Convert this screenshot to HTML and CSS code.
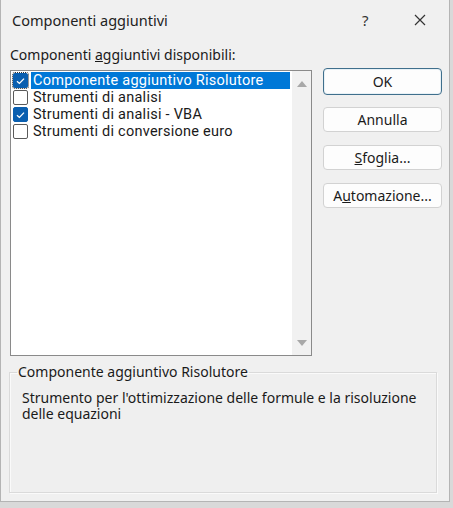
FILE: index.html
```html
<!DOCTYPE html>
<html lang="it">
<head>
<meta charset="utf-8">
<title>Componenti aggiuntivi</title>
<link rel="stylesheet" href="styles.css">
</head>
<body>
<div class="dialog">
  <div class="titlebar">
    <span class="title">Componenti aggiuntivi</span>
    <span class="help">?</span>
    <span class="close">
      <svg width="12" height="12" viewBox="0 0 12 12"><path d="M1 1L11 11M11 1L1 11" stroke="#333" stroke-width="1.2" fill="none"/></svg>
    </span>
  </div>
  <div class="content">
    <div class="main">
      <div class="left">
        <div class="label">Componenti <u>a</u>ggiuntivi disponibili:</div>
        <div class="listbox">
          <div class="items">
            <div class="item selected"><span class="cb checked focus"><svg viewBox="0 0 14 14" width="14" height="14"><path d="M3.2 7.2L5.8 9.6L10.8 4.4" stroke="#fff" stroke-width="1.4" fill="none"/></svg></span><span class="text">Componente aggiuntivo Risolutore</span></div>
            <div class="item"><span class="cb"></span><span class="text">Strumenti di analisi</span></div>
            <div class="item"><span class="cb checked"><svg viewBox="0 0 14 14" width="14" height="14"><path d="M3.2 7.2L5.8 9.6L10.8 4.4" stroke="#fff" stroke-width="1.4" fill="none"/></svg></span><span class="text">Strumenti di analisi - VBA</span></div>
            <div class="item"><span class="cb"></span><span class="text">Strumenti di conversione euro</span></div>
          </div>
          <div class="scrollbar">
            <svg width="10" height="6" viewBox="0 0 10 6"><path d="M0 6L5 0L10 6Z" fill="#a8a8a8"/></svg>
            <svg width="10" height="6" viewBox="0 0 10 6"><path d="M0 0L5 6L10 0Z" fill="#a8a8a8"/></svg>
          </div>
        </div>
      </div>
      <div class="buttons">
        <button class="btn default">OK</button>
        <button class="btn">Annulla</button>
        <button class="btn"><u>S</u>foglia...</button>
        <button class="btn">A<u>u</u>tomazione...</button>
      </div>
    </div>
    <fieldset class="group">
      <legend>Componente aggiuntivo Risolutore</legend>
      <p class="desc">Strumento per l'ottimizzazione delle formule e la risoluzione delle equazioni</p>
    </fieldset>
  </div>
</div>
</body>
</html>
```

FILE: styles.css
```css
html, body {
  margin: 0;
  padding: 0;
  background: #d9d9d9;
}
body {
  font-family: "Noto Sans", "Open Sans", sans-serif;
  font-size: 14px;
  color: #1a1a1a;
}
.dialog {
  width: 448px;
  height: 501px;
  background: #f0f0f0;
  border: 1px solid #b4b4b4;
  border-top: none;
  display: flex;
  flex-direction: column;
}
.titlebar {
  height: 40px;
  display: flex;
  align-items: center;
  padding-left: 11px;
}
.title {
  font-size: 14.5px;
  flex: 1;
  color: #222;
}
.help {
  font-size: 15px;
  width: 16px;
  margin-right: 36px;
  color: #333;
}
.close {
  width: 12px;
  height: 12px;
  margin-right: 23px;
  display: flex;
}
.content {
  padding: 6px 7px 0 7px;
  display: flex;
  flex-direction: column;
}
.main {
  display: flex;
  align-items: flex-start;
}
.left {
  width: 302px;
  display: flex;
  flex-direction: column;
  padding-left: 2px;
}
.label {
  height: 18px;
  line-height: 18px;
  margin-bottom: 6px;
}
.listbox {
  height: 284px;
  border: 1px solid #8a8a8a;
  background: #fff;
  display: flex;
}
.items {
  flex: 1;
  padding-top: 1px;
}
.item {
  height: 17px;
  display: flex;
  align-items: center;
}
.cb {
  width: 13px;
  height: 13px;
  border: 1px solid #5a5a5a;
  border-radius: 2px;
  margin-left: 2px;
  margin-right: 3px;
  background: #fff;
  display: flex;
  align-items: center;
  justify-content: center;
  flex-shrink: 0;
}
.cb svg {
  display: block;
}
.cb.checked {
  background: #0a5fb0;
  border-color: #0a5fb0;
}
.cb.focus {
  outline: 1px dotted #333;
  outline-offset: 0;
}
.text {
  font-family: Roboto, "Noto Sans", sans-serif;
  font-size: 14.5px;
  letter-spacing: 0.25px;
  height: 17px;
  line-height: 17px;
  padding: 0 2px;
  white-space: nowrap;
}
.item.selected .text {
  background: #0078d7;
  color: #fff;
  flex: 1;
  margin-right: 2px;
}
.scrollbar {
  width: 19px;
  background: #f1f1f1;
  display: flex;
  flex-direction: column;
  align-items: center;
  justify-content: space-between;
  padding: 10px 0 9px;
}
.scrollbar svg {
  display: block;
}
.buttons {
  margin-left: 11px;
  padding-top: 23px;
  display: flex;
  flex-direction: column;
  gap: 13px;
}
.btn {
  width: 119px;
  height: 25px;
  font-family: inherit;
  font-size: 14px;
  color: #1a1a1a;
  background: #fdfdfd;
  border: 1px solid #d2d2d2;
  border-radius: 4px;
  padding: 0;
}
.btn.default {
  height: 27px;
  margin-top: -1px;
  margin-bottom: -1px;
  border: 1px solid #3f6f8c;
  box-shadow: inset 0 0 0 1px #e8f1f6;
}
.group {
  margin: 8px 5px 0 1px;
  padding: 10px 12px 0 12px;
  height: 117px;
  border: 1px solid #dadada;
  box-shadow: inset 1px 1px 0 #fafafa, 1px 1px 0 #fafafa;
  background: #efefef;
}
.group legend {
  padding: 0 1px;
  margin-left: -5px;
  line-height: 16px;
}
.desc {
  margin: 0;
  line-height: 16px;
}
```
